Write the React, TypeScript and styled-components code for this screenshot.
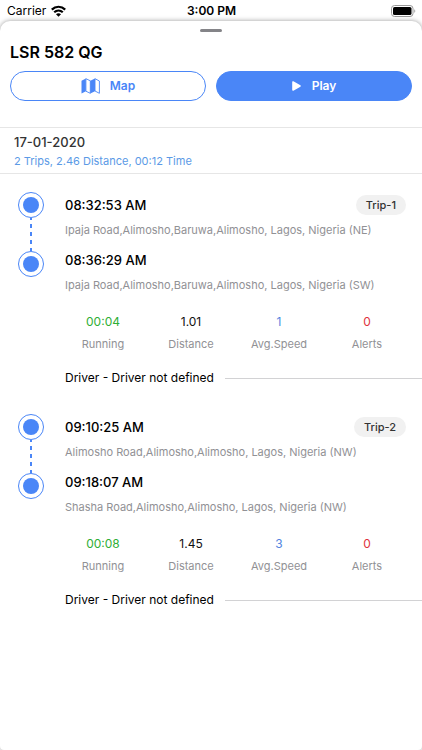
import React from "react";
import styled, { createGlobalStyle } from "styled-components";

const blue = "#4a86f7";

const GlobalStyle = createGlobalStyle`
  *, *::before, *::after { box-sizing: border-box; }
  body {
    margin: 0;
    background: #fff;
    font-family: Inter, "Liberation Sans", sans-serif;
    color: #000;
  }
`;

const Screen = styled.div`
  min-height: 100vh;
  display: flex;
  flex-direction: column;
  background: #fff;
`;

const StatusBar = styled.header`
  display: grid;
  grid-template-columns: 1fr auto 1fr;
  align-items: center;
  height: 21px;
  padding: 0 6px 0 7px;
  font-size: 12px;
  line-height: 20px;
`;

const Carrier = styled.span`
  display: flex;
  align-items: center;
  gap: 5px;
`;

const Clock = styled.span`
  font-weight: 600;
`;

const BatterySlot = styled.span`
  display: flex;
  justify-content: flex-end;
`;

const Sheet = styled.main`
  flex: 1;
  display: flex;
  flex-direction: column;
  border-radius: 10px 10px 4px 4px;
  background: #fff;
  box-shadow: 0 0 5px rgba(0, 0, 0, 0.4);
`;

const Handle = styled.div`
  width: 22px;
  height: 3px;
  margin: 8px auto 0;
  border-radius: 2px;
  background: #848488;
`;

const Title = styled.h1`
  margin: 10px 10px 9px;
  font-size: 16px;
  line-height: 20px;
  font-weight: 600;
`;

const Actions = styled.div`
  display: flex;
  gap: 10px;
  padding: 0 10px 26px;
`;

const ActionButton = styled.button<{ $filled?: boolean }>`
  flex: 1;
  display: flex;
  align-items: center;
  justify-content: center;
  gap: ${(p) => (p.$filled ? "11px" : "10px")};
  height: 30px;
  padding: 0;
  border: 1px solid ${blue};
  border-radius: 15px;
  background: ${(p) => (p.$filled ? blue : "#fff")};
  color: ${(p) => (p.$filled ? "#fff" : blue)};
  font: 600 12px/20px Inter, "Liberation Sans", sans-serif;
  cursor: pointer;
`;

const Summary = styled.section`
  padding: 4px 14px 2px;
  border-top: 1px solid #e6e6e6;
  border-bottom: 1px solid #e6e6e6;
`;

const DateHeading = styled.h2`
  margin: 0;
  font-size: 13px;
  line-height: 20px;
  font-weight: 500;
  color: #333;
`;

const Totals = styled.p`
  margin: 0;
  font-size: 11px;
  line-height: 19px;
  color: #5b9ae6;
`;

const TripCard = styled.article`
  display: flex;
  gap: 15px;
  padding: 18px 0 8px 18px;
`;

const Rail = styled.div`
  flex: none;
  display: flex;
  flex-direction: column;
  align-items: center;
  width: 26px;
`;

const Stop = styled.span`
  display: grid;
  place-items: center;
  width: 26px;
  height: 26px;
  border: 1px solid ${blue};
  border-radius: 50%;

  &::before {
    content: "";
    width: 16px;
    height: 16px;
    border-radius: 50%;
    background: ${blue};
  }
`;

const Dashes = styled.span`
  width: 2px;
  height: 33px;
  background: repeating-linear-gradient(${blue} 0 2px, transparent 2px 6px, ${blue} 6px 8px);
`;

const Details = styled.div`
  flex: 1;
  min-width: 0;
  padding-top: 3px;
`;

const StopRow = styled.div`
  display: flex;
  align-items: center;
  justify-content: space-between;
  height: 20px;
  padding: 0 16px 0 6px;
`;

const Time = styled.h3`
  margin: 0;
  font-size: 13px;
  line-height: 20px;
  font-weight: 500;
`;

const Tag = styled.span`
  padding: 0 10px;
  border-radius: 10px;
  background: #f1f1f1;
  font-size: 11px;
  line-height: 20px;
  font-weight: 500;
  color: #333;
`;

const Address = styled.p`
  margin: 5px 16px 10px 6px;
  font-size: 11px;
  line-height: 20px;
  color: #919195;
`;

const Stats = styled.dl`
  display: grid;
  grid-template-columns: repeat(4, 1fr);
  margin: 17px 11px 14px 0;
`;

const Stat = styled.div`
  display: flex;
  flex-direction: column-reverse;
  gap: 2px;
  text-align: center;
`;

const StatLabel = styled.dt`
  font-size: 11px;
  line-height: 20px;
  color: #919195;
`;

const StatValue = styled.dd<{ $color: string }>`
  margin: 0;
  font-size: 12px;
  line-height: 20px;
  color: ${(p) => p.$color};
`;

const Driver = styled.p`
  display: flex;
  align-items: center;
  gap: 11px;
  margin: 0;
  padding-left: 6px;
  font-size: 12px;
  line-height: 20px;

  &::after {
    content: "";
    flex: 1;
    height: 1px;
    background: #d2d2d4;
  }
`;

const WifiIcon = () => (
  <svg width="15" height="12" viewBox="0 0 15 12" fill="none" stroke="#000" strokeWidth="2.2" aria-hidden="true">
    <path d="M.8 4.6C4.6 .8 10.4 .8 14.2 4.6" />
    <path d="M3.2 7.3c2.5-2.4 6.1-2.4 8.6 0" />
    <path d="M7.5 11.7 5 9.2c1.4-1.3 3.6-1.3 5 0z" fill="#000" stroke="none" />
  </svg>
);

const BatteryIcon = () => (
  <svg width="25" height="12" viewBox="0 0 25 12" aria-hidden="true">
    <rect x=".5" y=".5" width="21.5" height="11" rx="3" fill="#fff" stroke="#999" />
    <rect x="2" y="2" width="18.5" height="8" rx="1.6" fill="#000" />
    <path d="M23.3 4.2c1.3.5 1.3 3.1 0 3.6z" fill="#999" />
  </svg>
);

const MapIcon = () => (
  <svg width="19" height="16" viewBox="0 0 19 16" aria-hidden="true">
    <path d="M.5 2.8 4.9.5v12.7L.5 15.5z" fill={blue} />
    <path d="M4.9.7 9.3 2.8v12.5l-4.4-2.1z" fill="#fff" stroke={blue} strokeWidth=".9" />
    <path d="M9.3 2.8 14 .5v12.7l-4.7 2.3z" fill={blue} />
    <path d="M14 .7 18.4 3v12.3L14 13z" fill="#fff" stroke={blue} strokeWidth=".9" />
  </svg>
);

const PlayIcon = () => (
  <svg width="9" height="10" viewBox="0 0 9 10" aria-hidden="true">
    <path d="M1 1v8l7-4z" fill="#fff" stroke="#fff" strokeWidth="1.6" strokeLinejoin="round" />
  </svg>
);

const trips = [
  {
    tag: "Trip-1",
    start: { time: "08:32:53 AM", address: "Ipaja Road,Alimosho,Baruwa,Alimosho, Lagos, Nigeria (NE)" },
    end: { time: "08:36:29 AM", address: "Ipaja Road,Alimosho,Baruwa,Alimosho, Lagos, Nigeria (SW)" },
    running: "00:04",
    distance: "1.01",
    speed: "1",
    alerts: "0",
  },
  {
    tag: "Trip-2",
    start: { time: "09:10:25 AM", address: "Alimosho Road,Alimosho,Alimosho, Lagos, Nigeria (NW)" },
    end: { time: "09:18:07 AM", address: "Shasha Road,Alimosho,Alimosho, Lagos, Nigeria (NW)" },
    running: "00:08",
    distance: "1.45",
    speed: "3",
    alerts: "0",
  },
];

function Trip({ trip }: { trip: (typeof trips)[number] }) {
  const stats = [
    { label: "Running", value: trip.running, color: "#2fae35" },
    { label: "Distance", value: trip.distance, color: "#111" },
    { label: "Avg.Speed", value: trip.speed, color: "#5285e0" },
    { label: "Alerts", value: trip.alerts, color: "#e0343c" },
  ];
  return (
    <TripCard>
      <Rail>
        <Stop />
        <Dashes />
        <Stop />
      </Rail>
      <Details>
        <StopRow>
          <Time>{trip.start.time}</Time>
          <Tag>{trip.tag}</Tag>
        </StopRow>
        <Address>{trip.start.address}</Address>
        <StopRow>
          <Time>{trip.end.time}</Time>
        </StopRow>
        <Address>{trip.end.address}</Address>
        <Stats>
          {stats.map((s) => (
            <Stat key={s.label}>
              <StatLabel>{s.label}</StatLabel>
              <StatValue $color={s.color}>{s.value}</StatValue>
            </Stat>
          ))}
        </Stats>
        <Driver>Driver - Driver not defined</Driver>
      </Details>
    </TripCard>
  );
}

export default function App() {
  return (
    <Screen>
      <GlobalStyle />
      <StatusBar>
        <Carrier>
          Carrier
          <WifiIcon />
        </Carrier>
        <Clock>3:00 PM</Clock>
        <BatterySlot>
          <BatteryIcon />
        </BatterySlot>
      </StatusBar>
      <Sheet>
        <Handle />
        <Title>LSR 582 QG</Title>
        <Actions>
          <ActionButton type="button">
            <MapIcon />
            Map
          </ActionButton>
          <ActionButton type="button" $filled>
            <PlayIcon />
            Play
          </ActionButton>
        </Actions>
        <Summary>
          <DateHeading>17-01-2020</DateHeading>
          <Totals>2 Trips, 2.46 Distance, 00:12 Time</Totals>
        </Summary>
        {trips.map((trip) => (
          <Trip key={trip.tag} trip={trip} />
        ))}
      </Sheet>
    </Screen>
  );
}
